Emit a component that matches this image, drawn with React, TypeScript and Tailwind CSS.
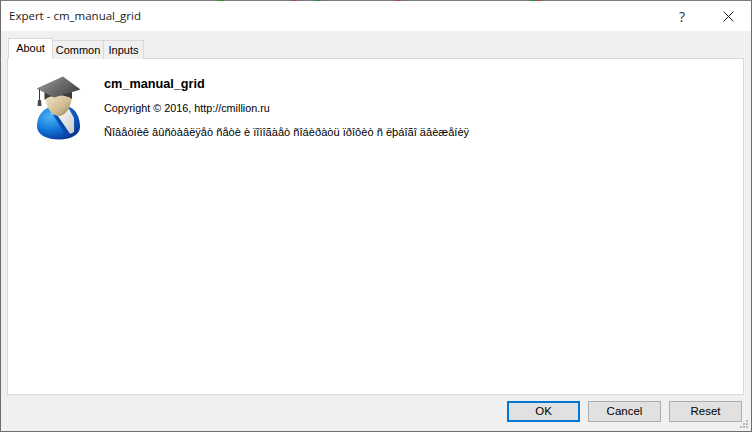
const buttons = ['OK', 'Cancel', 'Reset'];

function GraduateIcon() {
  return (
    <svg width="46" height="64" viewBox="0 0 46 64">
      <defs>
        <radialGradient id="suit" cx="0.3" cy="0.3" r="0.85">
          <stop offset="0" stopColor="#4db4f6" />
          <stop offset="0.5" stopColor="#1273d8" />
          <stop offset="1" stopColor="#052a86" />
        </radialGradient>
        <linearGradient id="face" x1="0" y1="0" x2="1" y2="1">
          <stop offset="0" stopColor="#f3e8cc" />
          <stop offset="0.6" stopColor="#d2bd93" />
          <stop offset="1" stopColor="#8f7a55" />
        </linearGradient>
        <linearGradient id="cap" x1="0" y1="0" x2="1" y2="0.6">
          <stop offset="0" stopColor="#a3a3a3" />
          <stop offset="0.55" stopColor="#6e6e6e" />
          <stop offset="1" stopColor="#474747" />
        </linearGradient>
        <linearGradient id="shirt" x1="0" y1="0" x2="1" y2="1">
          <stop offset="0" stopColor="#ffffff" />
          <stop offset="1" stopColor="#c9cbc8" />
        </linearGradient>
      </defs>
      <path d="M1 50 C1 40 7 33 14 31 L33 31 C40 33 44 42 44 51 C44 59 34 63.5 23 63.5 C11 63.5 1 59 1 50 Z" fill="url(#suit)" />
      <path d="M19 36 L33 33 L38 42 L38 56 L34 58 Z" fill="url(#shirt)" />
      <path d="M14 33 L19 36 L34 58 L30 60 Z" fill="#0b47ad" />
      <path d="M16 33 L20 38 L14 39 Z" fill="#6cc4f8" />
      <path d="M9 18 C9 30 15 40 23 40 C30 40 36 30 36 18 Z" fill="url(#face)" />
      <path d="M8.5 13 L8.5 24 C15 18 29 18 36 23 L36 14 Z" fill="#3a3a3a" />
      <path d="M0.5 12.5 L27 0.5 L44.5 13.5 L18 21.5 Z" fill="url(#cap)" />
      <path d="M3.5 13 L3.5 24" stroke="#3a3a3a" strokeWidth="1" />
      <path d="M2 24 H5 L5.5 30 H1.5 Z" fill="#4a4a4a" />
    </svg>
  );
}

export default function App() {
  return (
    <div className="w-[752px] h-[432px] flex flex-col bg-[#f0f0f0] font-['Liberation_Sans',sans-serif] text-[11px] text-black border-l border-r border-b border-[#6d6d6d] overflow-hidden">
      {/* window edge, bits of the chart behind show through */}
      <div className="h-[1px] shrink-0 flex bg-[#7a7a7a]">
        <div className="w-[217px]" />
        <div className="w-[6px] bg-[#2e8b3a]" />
        <div className="w-[67px]" />
        <div className="w-[6px] bg-[#b04a4a]" />
        <div className="w-[18px]" />
        <div className="w-[6px] bg-[#2e8b3a]" />
        <div className="w-[74px]" />
        <div className="w-[6px] bg-[#b04a4a]" />
        <div className="w-[129px]" />
        <div className="w-[6px] bg-[#2e8b3a]" />
        <div className="w-[6px] bg-[#b04a4a]" />
      </div>

      {/* title bar */}
      <div className="h-[30px] shrink-0 bg-white flex items-center pl-[8px]">
        <span className="text-[#1a1a1a] text-[11.5px] font-['Open_Sans',sans-serif]">Expert - cm_manual_grid</span>
        <div className="ml-auto flex items-center">
          <span className="w-[46px] text-center text-[14px] text-[#333333] font-['Open_Sans',sans-serif]">?</span>
          <span className="w-[46px] flex justify-center">
            <svg width="11" height="11" viewBox="0 0 11 11">
              <path d="M0.5 0.5 L10.5 10.5 M10.5 0.5 L0.5 10.5" stroke="#222222" strokeWidth="1" />
            </svg>
          </span>
        </div>
      </div>

      {/* tabs + page */}
      <div className="flex-1 flex flex-col pl-[6px] pr-[7px] pt-[7px] min-h-0">
        <div className="flex items-end h-[21px] shrink-0 relative z-10 pl-[1px]">
          <div className="h-[21px] w-[45px] bg-white border border-b-0 border-[#d9d9d9] flex items-center justify-center pb-[2px]">About</div>
          <div className="h-[19px] w-[51px] bg-[#f0f0f0] border border-l-0 border-b-0 border-[#d9d9d9] flex items-center justify-center">Common</div>
          <div className="h-[19px] w-[40px] bg-[#f0f0f0] border border-l-0 border-b-0 border-[#d9d9d9] flex items-center justify-center">Inputs</div>
        </div>
        <div className="flex-1 bg-white border border-[#d9d9d9] -mt-[1px] flex items-start pl-[28px] pt-[17px]">
          <GraduateIcon />
          <div className="ml-[22px]">
            <div className="text-[12.7px] font-bold leading-[16px]">cm_manual_grid</div>
            <div className="mt-[9px] leading-[14px] text-[10.8px]">Copyright © 2016, http://cmillion.ru</div>
            <div className="mt-[10px] leading-[14px] text-[11.1px]">Ñîâåòíèê âûñòàâëÿåò ñåòè è ïîìîãàåò ñîáèðàòü ïðîôèò ñ ëþáîãî äâèæåíèÿ</div>
          </div>
        </div>
      </div>

      {/* footer buttons */}
      <div className="h-[36px] shrink-0 flex items-start justify-end gap-[8px] pt-[6px] pr-[9px] relative">
        {buttons.map((label) => (
          <button
            key={label}
            className={`w-[73px] h-[21px] bg-[#e1e1e1] flex items-center justify-center text-[11.5px] ${
              label === 'OK' ? 'border-2 border-[#0078d7]' : 'border border-[#adadad]'
            }`}
          >
            {label}
          </button>
        ))}
        <svg className="absolute right-[2px] bottom-[2px]" width="9" height="9" viewBox="0 0 9 9" fill="#b8b8b8">
          <rect x="6" y="0" width="2" height="2" />
          <rect x="3" y="3" width="2" height="2" />
          <rect x="6" y="3" width="2" height="2" />
          <rect x="0" y="6" width="2" height="2" />
          <rect x="3" y="6" width="2" height="2" />
          <rect x="6" y="6" width="2" height="2" />
        </svg>
      </div>
    </div>
  );
}
